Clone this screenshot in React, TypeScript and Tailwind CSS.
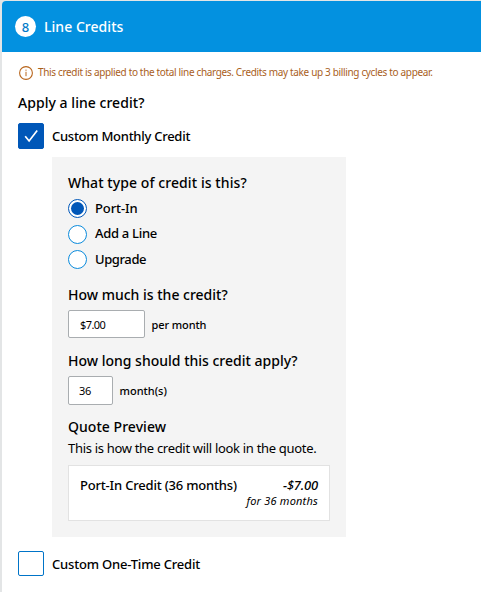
import { useState } from "react"
import clsx from "clsx"

type CreditType = "port-in" | "add-line" | "upgrade"

const CREDIT_TYPES: { id: CreditType; label: string; className: string }[] = [
  { id: "port-in", label: "Port-In", className: "tracking-[-0.1px]" },
  { id: "add-line", label: "Add a Line", className: "tracking-[-0.3px]" },
  { id: "upgrade", label: "Upgrade", className: "tracking-[-0.4px]" },
]

function InfoIcon() {
  return (
    <svg width="14" height="14" viewBox="0 0 14 14" fill="none" stroke="#b8651b" aria-hidden>
      <circle cx="7" cy="7" r="6.4" strokeWidth="1.1" />
      <path d="M7 5.8v4.4M7 3.6v1.2" strokeWidth="1" />
    </svg>
  )
}

function Checkbox({ checked, onToggle, label }: { checked: boolean; onToggle: () => void; label: string }) {
  return (
    <button
      type="button"
      role="checkbox"
      aria-checked={checked}
      aria-label={label}
      onClick={onToggle}
      className={clsx(
        "flex w-[26px] shrink-0 items-center justify-center rounded-[2px] border",
        checked ? "h-[26px] border-[#0057b8] bg-[#0057b8]" : "h-[25px] border-[#0074c8] bg-white",
      )}
    >
      {checked && (
        <svg width="14" height="14" viewBox="0 0 14 14" fill="none" stroke="white" strokeWidth="1.7" aria-hidden>
          <path d="M1.2 7.2 5.1 12 13.2 1.6" />
        </svg>
      )}
    </button>
  )
}

function Radio({ checked, onSelect, label }: { checked: boolean; onSelect: () => void; label: string }) {
  return (
    <button
      type="button"
      role="radio"
      aria-checked={checked}
      aria-label={label}
      onClick={onSelect}
      className={clsx(
        "flex size-[19px] shrink-0 items-center justify-center rounded-full border bg-white",
        checked ? "border-[#0057b8]" : "border-[#0a8bdc]",
      )}
    >
      {checked && <span className="size-[13px] rounded-full bg-[#0057b8]" />}
    </button>
  )
}

export default function App() {
  const [monthly, setMonthly] = useState(true)
  const [oneTime, setOneTime] = useState(false)
  const [creditType, setCreditType] = useState<CreditType>("port-in")
  const [amount, setAmount] = useState("$7.00")
  const [months, setMonths] = useState("36")

  return (
    <div className="h-[592px] w-[481px] overflow-hidden bg-[#e3e5e6] pt-px pl-[2px] font-['Noto_Sans',sans-serif] text-[13px] leading-5 font-medium whitespace-nowrap text-black">
      <div className="h-full overflow-hidden rounded-tl-[4px] bg-white">
        <header className="flex h-[51px] items-center bg-[#0391e0] pl-[13px] text-white">
          <span className="flex size-[21px] items-center justify-center rounded-full bg-white text-[13px] text-[#0079c9]">
            8
          </span>
          <h1 className="ml-2 text-sm leading-5 font-medium tracking-[0.04px]">Line Credits</h1>
        </header>

        <main className="pl-4">
          <p className="mt-[10px] flex h-[21px] items-center pl-px text-[10px] font-normal text-[#a9601c]">
            <InfoIcon />
            <span className="mb-px ml-[5px] tracking-[-0.34px]">
              This credit is applied to the total line charges. Credits may take up 3 billing cycles to appear.
            </span>
          </p>
          <h2 className="mt-[10px] text-sm leading-5 font-medium tracking-[0.04px]">Apply a line credit?</h2>

          <div className="mt-[10px] flex items-center gap-2">
            <Checkbox checked={monthly} onToggle={() => setMonthly(!monthly)} label="Custom Monthly Credit" />
            <span className="tracking-[-0.27px]">Custom Monthly Credit</span>
          </div>

          <section className="mt-2 ml-[34px] h-[380px] w-[294px] bg-[#f4f4f4] px-4 pt-4">
            <h3 className="text-sm leading-5 font-medium tracking-[0.08px]">What type of credit is this?</h3>
            <div role="radiogroup" className="mt-[3px]">
              {CREDIT_TYPES.map((type) => (
                <div key={type.id} className="flex h-[25.5px] items-center gap-2">
                  <Radio
                    checked={creditType === type.id}
                    onSelect={() => setCreditType(type.id)}
                    label={type.label}
                  />
                  <span className={clsx("mb-[2px]", type.className)}>{type.label}</span>
                </div>
              ))}
            </div>

            <h3 className="mt-[12.5px] text-sm leading-5 font-medium">How much is the credit?</h3>
            <div className="mt-[5px] flex items-center">
              <input
                value={amount}
                onChange={(event) => setAmount(event.target.value)}
                className="h-7 w-[77px] rounded-[2px] border border-[#a9adb0] bg-white pl-[11px] text-[11px] font-normal tracking-[-0.6px]"
              />
              <span className="mt-[2px] ml-[6.5px] text-[11px] tracking-[-0.1px]">per month</span>
            </div>

            <h3 className="mt-[13px] text-sm leading-5 font-medium">How long should this credit apply?</h3>
            <div className="mt-[5px] flex items-center">
              <input
                value={months}
                onChange={(event) => setMonths(event.target.value)}
                className="h-[29px] w-[45px] rounded-[2px] border border-[#a9adb0] bg-white pl-[10px] text-[11px] font-normal tracking-[-0.3px]"
              />
              <span className="ml-[6.5px] text-[11px]">month(s)</span>
            </div>

            <h3 className="mt-3 text-sm leading-5 font-medium tracking-[0.04px]">Quote Preview</h3>
            <p className="mt-px font-normal tracking-[-0.31px]">This is how the credit will look in the quote.</p>
            <div className="mt-[7px] flex h-14 justify-between border border-[#e2e2e2] bg-white pt-[9px] pr-[11px] pl-[11px]">
              <span className="tracking-[-0.19px]">Port-In Credit (36 months)</span>
              <div className="text-right italic">
                <div className="tracking-[-0.2px]">-$7.00</div>
                <div className="text-[11px] leading-3 font-normal tracking-[0.2px]">for 36 months</div>
              </div>
            </div>
          </section>

          <div className="mt-[14px] flex items-center gap-2">
            <Checkbox checked={oneTime} onToggle={() => setOneTime(!oneTime)} label="Custom One-Time Credit" />
            <span className="tracking-[-0.19px]">Custom One-Time Credit</span>
          </div>
        </main>
      </div>
    </div>
  )
}
